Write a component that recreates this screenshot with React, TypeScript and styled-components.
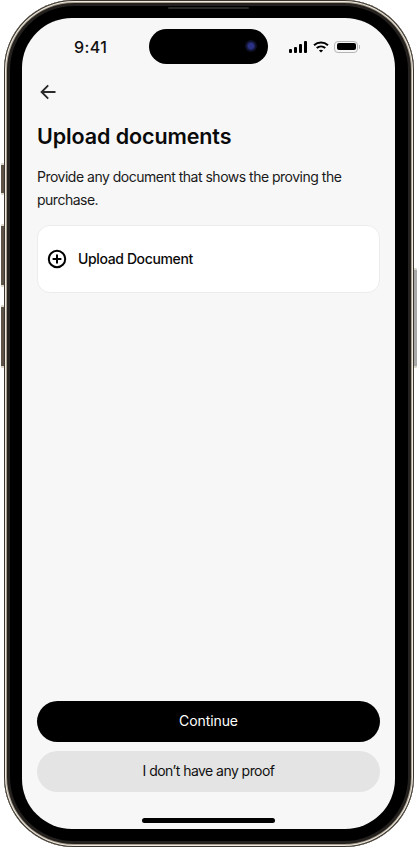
import styled, { createGlobalStyle } from 'styled-components';

export default function App() {
  return (
    <>
      <GlobalStyle />
      <Page>
        <PhoneBody>
          <SideKey $side="left" $top={163} $height={32} />
          <SideKey $side="left" $top={224} $height={63} />
          <SideKey $side="left" $top={305} $height={63} />
          <SideKey $side="right" $top={268} $height={100} />
          <Speaker />
          <Screen>
            <StatusBar>
              <Clock>9:41</Clock>
              <Island>
                <Lens />
              </Island>
              <StatusIcons>
                <svg width="19" height="12" viewBox="0 0 19 12" fill="#000">
                  <rect x="0" y="8" width="3" height="4" rx="1" />
                  <rect x="5" y="6" width="3" height="6" rx="1" />
                  <rect x="10" y="3" width="3" height="9" rx="1" />
                  <rect x="15" y="0" width="3" height="12" rx="1" />
                </svg>
                <svg width="16" height="12" viewBox="0 0 16 12" fill="none" stroke="#000" strokeWidth="2">
                  <path d="M1 4.3C5 .7 11 .7 15 4.3" />
                  <path d="M3.7 7C6.2 4.9 9.8 4.9 12.3 7" />
                  <path d="M8 11.6 5.9 9.5C7.1 8.5 8.9 8.5 10.1 9.5Z" fill="#000" stroke="none" />
                </svg>
                <Battery>
                  <BatteryFill />
                </Battery>
              </StatusIcons>
            </StatusBar>
            <Content>
              <BackButton aria-label="Back">
                <svg width="16" height="16" viewBox="0 0 16 16" fill="none" stroke="#2b2b2b" strokeWidth="1.9">
                  <path d="M15.5 8H2" />
                  <path d="M8.2 1.4 1.6 8l6.6 6.6" />
                </svg>
              </BackButton>
              <Title>Upload documents</Title>
              <Description>Provide any document that shows the proving the purchase.</Description>
              <UploadCard>
                <svg width="20" height="20" viewBox="0 0 20 20" fill="none" stroke="#000" strokeWidth="2">
                  <circle cx="10" cy="10" r="8.2" />
                  <path d="M10 5.6v8.8M5.6 10h8.8" />
                </svg>
                <UploadLabel>Upload Document</UploadLabel>
              </UploadCard>
              <Actions>
                <ActionButton $primary>Continue</ActionButton>
                <ActionButton>I don’t have any proof</ActionButton>
              </Actions>
            </Content>
            <HomeBar>
              <HomeIndicator />
            </HomeBar>
          </Screen>
        </PhoneBody>
      </Page>
    </>
  );
}

const GlobalStyle = createGlobalStyle`
  html, body {
    margin: 0;
    padding: 0;
    background: #fff;
  }
  * {
    box-sizing: border-box;
  }
`;

const Page = styled.div`
  width: 418px;
  height: 850px;
  overflow: hidden;
  padding: 0 4px;
  font-family: Inter, "Liberation Sans", sans-serif;
`;

const PhoneBody = styled.div`
  position: relative;
  width: 410px;
  height: 847px;
  padding: 18px 19px 18px 18px;
  background: #000;
  border-radius: 70px;
  box-shadow:
    inset 0 0 0 1px #3b362f,
    inset 0 0 0 2px #efe9de,
    inset 0 0 0 3px #a59e91,
    inset 0 0 0 6px #24211e;
`;

const Speaker = styled.div`
  position: absolute;
  top: 7px;
  left: 164px;
  width: 81px;
  height: 2px;
  background: #2a2a2a;
  border-radius: 1px;
`;

const SideKey = styled.div<{ $side: 'left' | 'right'; $top: number; $height: number }>`
  position: absolute;
  top: ${(p) => p.$top}px;
  ${(p) => p.$side}: -3px;
  width: 3px;
  height: ${(p) => p.$height}px;
  background: ${(p) => (p.$side === 'right' ? '#a8a8a8' : '#5c5248')};
  border-top: 2px solid #d9d4ca;
  border-bottom: 2px solid #d9d4ca;
  border-radius: 1px;
`;

const Screen = styled.div`
  display: flex;
  flex-direction: column;
  width: 373px;
  height: 811px;
  background: #f7f7f7;
  border-radius: 50px;
  overflow: hidden;
`;

const StatusBar = styled.div`
  display: flex;
  align-items: center;
  height: 46px;
  margin-top: 5px;
  padding: 0 33px 0 52px;
`;

const Clock = styled.div`
  width: 75px;
  padding-top: 1px;
  font-size: 16px;
  font-weight: 500;
  letter-spacing: 0.4px;
  color: #111;
`;

const Island = styled.div`
  display: flex;
  align-items: center;
  justify-content: flex-end;
  width: 119px;
  height: 35px;
  padding-right: 11px;
  background: #000;
  border-radius: 18px;
`;

const Lens = styled.div`
  width: 12px;
  height: 12px;
  border-radius: 50%;
  background: radial-gradient(circle, #2b3285 0 30%, #10122c 55%, #050508 100%);
`;

const StatusIcons = styled.div`
  display: flex;
  align-items: center;
  gap: 5px;
  margin: 1px 0 0 21px;
`;

const Battery = styled.div`
  position: relative;
  width: 24px;
  height: 12px;
  padding: 1.5px;
  border: 1px solid #b5b5b5;
  border-radius: 4px;

  &::after {
    content: '';
    position: absolute;
    top: 3px;
    right: -3px;
    width: 1.5px;
    height: 4px;
    background: #b5b5b5;
    border-radius: 0 1px 1px 0;
  }
`;

const BatteryFill = styled.div`
  width: 100%;
  height: 100%;
  background: #000;
  border-radius: 2px;
`;

const Content = styled.div`
  flex: 1;
  display: flex;
  flex-direction: column;
  padding: 0 15px;
`;

const BackButton = styled.button`
  display: flex;
  width: 16px;
  height: 16px;
  margin: 15px 0 0 3px;
  padding: 0;
  border: 0;
  background: transparent;
`;

const Title = styled.h1`
  margin: 21px 0 0;
  font-size: 21.5px;
  line-height: 30px;
  font-weight: 600;
  letter-spacing: -0.1px;
  color: #0a0a0a;
`;

const Description = styled.p`
  margin: 14px 0 0;
  font-size: 14px;
  line-height: 23px;
  font-weight: 400;
  letter-spacing: -0.5px;
  color: #1a1a1a;
`;

const UploadCard = styled.div`
  display: flex;
  align-items: center;
  gap: 11px;
  height: 68px;
  margin-top: 14px;
  padding: 0 9px 0 9px;
  background: #fff;
  border: 1px solid #ececec;
  border-radius: 13px;
`;

const UploadLabel = styled.span`
  margin-top: -1px;
  font-size: 14px;
  font-weight: 500;
  letter-spacing: -0.37px;
  color: #0a0a0a;
`;

const Actions = styled.div`
  display: flex;
  flex-direction: column;
  gap: 9px;
  margin-top: auto;
`;

const ActionButton = styled.button<{ $primary?: boolean }>`
  height: 41px;
  padding: 0 0 2px;
  border: 0;
  border-radius: 21px;
  font-family: inherit;
  font-size: 14px;
  font-weight: 400;
  letter-spacing: ${(p) => (p.$primary ? '-0.1px' : '-0.55px')};
  color: ${(p) => (p.$primary ? '#fff' : '#111')};
  background: ${(p) => (p.$primary ? '#000' : '#e4e4e4')};
`;

const HomeBar = styled.div`
  display: flex;
  justify-content: center;
  height: 37px;
  padding-top: 26px;
`;

const HomeIndicator = styled.div`
  width: 133px;
  height: 5px;
  background: #000;
  border-radius: 3px;
`;
